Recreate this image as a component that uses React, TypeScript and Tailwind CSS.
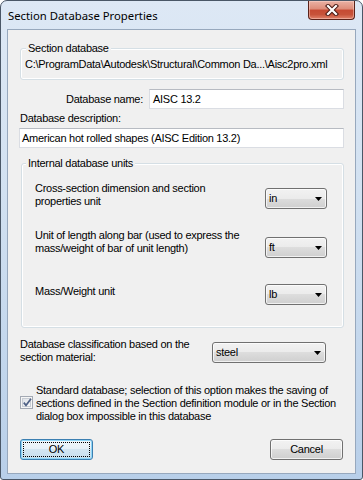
import React from "react";

function Combo({ value, w, cls = "" }: { value: string; w: string; cls?: string }) {
  return (
    <div
      className={`${w} ${cls} h-[21px] shrink-0 flex items-center border border-[#707070] rounded-[3px] bg-[linear-gradient(to_bottom,#f2f2f2_0%,#ebebeb_50%,#dddddd_50%,#cfcfcf_100%)] shadow-[inset_0_0_0_1px_rgba(255,255,255,0.7)] pl-[3px]`}
    >
      <span className="leading-[13px]">{value}</span>
      <svg className="ml-auto mr-[4px]" width="7" height="4" viewBox="0 0 7 4">
        <polygon points="0,0 7,0 3.5,4" fill="#000" />
      </svg>
    </div>
  );
}

export default function App() {
  return (
    <div
      className="w-[363px] h-[480px] flex flex-col border border-[#4a5767] rounded-t-[7px] rounded-b-[3px] bg-[linear-gradient(to_bottom,#dde8f5_0%,#d2e1f1_40%,#b8cfe9_100%)] px-[6px] pb-[5px] text-black"
      style={{ fontFamily: "'Liberation Sans', Arial, sans-serif" }}
    >
      {/* title bar */}
      <div className="h-[28px] shrink-0 flex items-start">
        <div
          className="pl-[1px] pt-[7px] text-[11.3px] leading-[16px] text-black"
          style={{ fontFamily: "'Noto Sans', 'Open Sans', sans-serif" }}
        >
          Section Database Properties
        </div>
        <div className="ml-auto mr-[1px] w-[47px] h-[19px] rounded-b-[4px] border border-t-0 border-[#5a2219] bg-[linear-gradient(to_bottom,#eab2a5_0%,#dd8b78_45%,#c64a33_50%,#c7533a_75%,#e0826a_100%)] shadow-[inset_0_0_0_1px_rgba(255,220,210,0.45)] flex items-center justify-center">
          <svg width="14" height="12" viewBox="0 0 14 12">
            <path d="M3 2 L11 10 M11 2 L3 10" stroke="#4a1a14" strokeWidth="4.2" strokeLinecap="square" />
            <path d="M3 2 L11 10 M11 2 L3 10" stroke="#ffffff" strokeWidth="2.2" strokeLinecap="square" />
          </svg>
        </div>
      </div>

      {/* client area */}
      <div className="flex-1 flex flex-col border border-[#97a8bd] bg-[#f0f0f0] text-[11px] tracking-[-0.27px]">
        {/* group 1 */}
        <div className="relative mt-[18px] ml-[12px] w-[324px] border border-[#d5dfe5] rounded-[3px] shadow-[inset_0_0_0_1px_#ffffff] pt-[8px] pb-[8px] pl-[4px]">
          <div className="absolute left-[5px] -top-[8px] px-[2px] bg-[#f0f0f0] leading-[14px]">Section database</div>
          <div className="leading-[14px] whitespace-nowrap">
            {"C:\\ProgramData\\Autodesk\\Structural\\Common Da...\\Aisc2pro.xml"}
          </div>
        </div>

        {/* name row */}
        <div className="mt-[9px] ml-[12px] w-[324px] flex items-center">
          <div className="w-[123px] text-right leading-[14px]">Database name:</div>
          <div className="ml-[6px] flex-1 h-[20px] flex items-center bg-white border border-[#dadde3] border-t-[#b7bbc2] pl-[3px] leading-[14px]">
            AISC 13.2
          </div>
        </div>

        <div className="mt-[2px] ml-[12px] leading-[14px]">Database description:</div>
        <div className="mt-[3px] ml-[11px] w-[325px] h-[20px] flex items-center bg-white border border-[#dadde3] border-t-[#b7bbc2] pl-[2px] leading-[14px]">
          American hot rolled shapes (AISC Edition 13.2)
        </div>

        {/* group 2 */}
        <div className="relative mt-[15px] ml-[13px] w-[323px] border border-[#d5dfe5] rounded-[3px] shadow-[inset_0_0_0_1px_#ffffff] pt-[18px] pb-[22px] pl-[13px]">
          <div className="absolute left-[4px] -top-[8px] px-[2px] bg-[#f0f0f0] leading-[14px]">Internal database units</div>

          <div className="flex items-start">
            <div className="w-[230px] leading-[13px]">
              Cross-section dimension and section
              <br />
              properties unit
            </div>
            <Combo value="in" w="w-[62px]" cls="mt-[6px]" />
          </div>

          <div className="mt-[20px] flex items-start">
            <div className="w-[230px] leading-[13px]">
              Unit of length along bar (used to express the
              <br />
              mass/weight of bar of unit length)
            </div>
            <Combo value="ft" w="w-[62px]" cls="mt-[8px]" />
          </div>

          <div className="mt-[26px] flex items-start">
            <div className="w-[230px] leading-[13px] mt-[1px]">Mass/Weight unit</div>
            <Combo value="lb" w="w-[62px]" />
          </div>
        </div>

        {/* classification */}
        <div className="mt-[10px] ml-[12px] flex items-start">
          <div className="w-[192px] leading-[13px]">
            Database classification based on the
            <br />
            section material:
          </div>
          <Combo value="steel" w="w-[114px]" cls="mt-[4px]" />
        </div>

        {/* checkbox */}
        <div className="mt-[20px] ml-[12px] flex items-start">
          <div className="mt-[12px] w-[13px] h-[13px] shrink-0 border border-[#a3a9b3] bg-[#f6f6f6] p-[1px]">
            <div className="w-full h-full border border-[#c8cdd4] bg-[linear-gradient(135deg,#dfe3e8_0%,#f7f8f9_100%)] relative">
              <svg className="absolute -left-[1px] -top-[2px]" width="11" height="11" viewBox="0 0 11 11">
                <path d="M1.8 5.6 L4 8.3 L9 1.8" fill="none" stroke="#4f6186" strokeWidth="1.7" strokeLinejoin="miter" />
              </svg>
            </div>
          </div>
          <div className="ml-[3px] leading-[13px] whitespace-nowrap">
            Standard database; selection of this option makes the saving of
            <br />
            sections defined in the Section definition module or in the Section
            <br />
            dialog box impossible in this database
          </div>
        </div>

        {/* buttons */}
        <div className="mt-[16px] ml-[12px] w-[323px] flex justify-between">
          <div className="w-[73px] h-[21px] rounded-[3px] border border-[#3c7fb1] bg-[linear-gradient(to_bottom,#f1f7fb_0%,#e6f0f7_50%,#d3e5f1_50%,#c8dfee_100%)] shadow-[inset_0_0_0_1px_#8fd6f7] p-[2px]">
            <div className="w-full h-full border border-dotted border-black flex items-center justify-center leading-[13px]">
              OK
            </div>
          </div>
          <div className="w-[73px] h-[21px] rounded-[3px] border border-[#707070] bg-[linear-gradient(to_bottom,#f2f2f2_0%,#ebebeb_50%,#dddddd_50%,#cfcfcf_100%)] shadow-[inset_0_0_0_1px_rgba(255,255,255,0.7)] flex items-center justify-center leading-[13px]">
            Cancel
          </div>
        </div>
      </div>
    </div>
  );
}
